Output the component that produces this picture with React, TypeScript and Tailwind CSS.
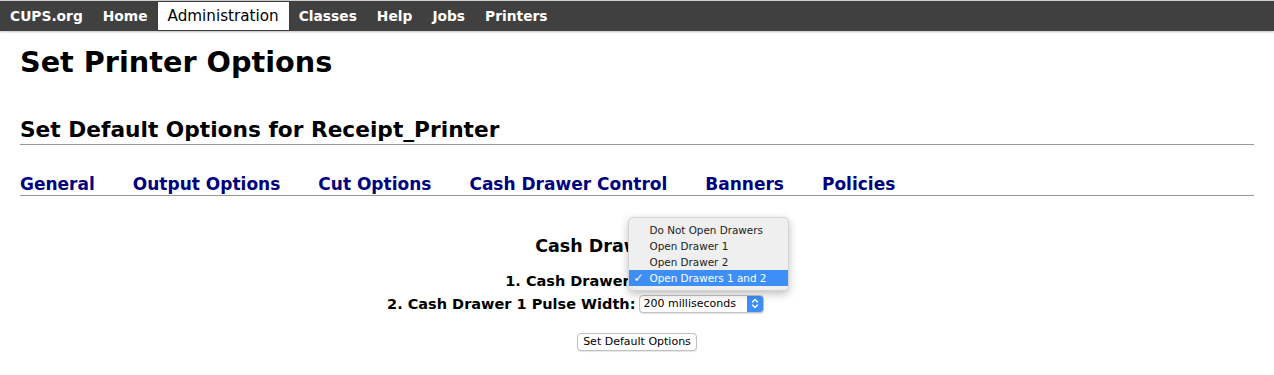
const navItems = [
  { label: 'CUPS.org', active: false },
  { label: 'Home', active: false },
  { label: 'Administration', active: true },
  { label: 'Classes', active: false },
  { label: 'Help', active: false },
  { label: 'Jobs', active: false },
  { label: 'Printers', active: false },
];

const tabs = ['General', 'Output Options', 'Cut Options', 'Cash Drawer Control', 'Banners', 'Policies'];

const drawerChoices = ['Do Not Open Drawers', 'Open Drawer 1', 'Open Drawer 2', 'Open Drawers 1 and 2'];

function Chevrons() {
  return (
    <svg width="8" height="11" viewBox="0 0 8 11" fill="none" stroke="white" strokeWidth="1.4" strokeLinecap="round" strokeLinejoin="round">
      <path d="M1.5 4 L4 1.5 L6.5 4" />
      <path d="M1.5 7 L4 9.5 L6.5 7" />
    </svg>
  );
}

function Select({ value, width }: { value: string; width: string }) {
  return (
    <div className={`${width} flex h-[18px] items-stretch rounded-[4px] border border-[#c3c3c3] bg-white shadow-[0_1px_1px_rgba(0,0,0,0.12)]`}>
      <span className="flex-1 truncate pl-[4px] text-[11px] leading-[16px] text-black">{value}</span>
      <span className="flex w-[16px] items-center justify-center rounded-r-[3px] bg-[#3d8ef7]">
        <Chevrons />
      </span>
    </div>
  );
}

export default function App() {
  return (
    <div className="min-h-[375px] bg-white font-['DejaVu_Sans',sans-serif] text-black">
      {/* top navigation */}
      <nav className="flex h-[31px] border-t border-[#cfcfcf] bg-[#404040] shadow-[0_1px_2px_rgba(0,0,0,0.25)]">
        {navItems.map((item) =>
          item.active ? (
            <span key={item.label} className="my-[1px] flex items-center bg-white px-[10px] text-[15.2px] leading-[18px] text-black shadow-[0_0_2px_rgba(0,0,0,0.3)]">
              {item.label}
            </span>
          ) : (
            <span key={item.label} className="flex items-center px-[10px] text-[13.8px] font-bold leading-[18px] text-white">
              {item.label}
            </span>
          )
        )}
      </nav>

      <div className="px-5">
        <h1 className="mt-[13px] text-[28.7px] font-bold leading-[36px]">Set Printer Options</h1>

        <h2 className="mt-[36px] border-b border-[#9a9a9a] text-[21.7px] font-bold leading-[28px]">
          Set Default Options for Receipt_Printer
        </h2>

        {/* option groups */}
        <div className="mt-[28px] flex gap-[38px] border-b border-[#9a9a9a]">
          {tabs.map((t) => (
            <a key={t} className="text-[17px] font-bold leading-[22px] text-[#000080]">
              {t}
            </a>
          ))}
        </div>

        <form className="flex flex-col items-center">
          <h3 className="mt-[39px] text-[17.5px] font-bold leading-[22px]">Cash Drawer Control</h3>

          <div className="mt-[12px] grid w-[500px] grid-cols-2 gap-x-[3px]">
            <div className="flex h-[23px] items-center justify-end text-[14.5px] font-bold leading-[18px]">1. Cash Drawer:</div>
            <div className="relative flex h-[23px] items-center">
              <Select value="Open Drawers 1 and 2" width="w-[148px]" />
              {/* open popup menu */}
              <div className="absolute left-[-11px] top-[-52px] w-[161px] rounded-[5px] border border-[#d4d4d4] bg-[#efefef] py-[4px] shadow-[0_3px_8px_rgba(0,0,0,0.25)]">
                {drawerChoices.map((c, i) => {
                  const selected = i === drawerChoices.length - 1;
                  return (
                    <div
                      key={c}
                      className={
                        selected
                          ? 'relative h-[16px] bg-[#3d8ef7] pl-[21px] text-[10.4px] leading-[16px] text-white'
                          : 'h-[16px] pl-[21px] text-[10.4px] leading-[16px] text-[#222]'
                      }
                    >
                      {selected && <span className="absolute left-[5px] top-0 text-[12px] font-bold">✓</span>}
                      {c}
                    </div>
                  );
                })}
              </div>
            </div>

            <div className="flex h-[23px] items-center justify-end text-[14.5px] font-bold leading-[18px]">2. Cash Drawer 1 Pulse Width:</div>
            <div className="flex h-[23px] items-center">
              <Select value="200 milliseconds" width="w-[125px]" />
            </div>
          </div>

          <button
            type="button"
            className="mt-[18px] h-[18px] rounded-[4px] border border-[#bfbfbf] bg-white px-[5px] text-[11px] leading-[16px] shadow-[0_1px_1px_rgba(0,0,0,0.1)]"
          >
            Set Default Options
          </button>
        </form>
      </div>
    </div>
  );
}
